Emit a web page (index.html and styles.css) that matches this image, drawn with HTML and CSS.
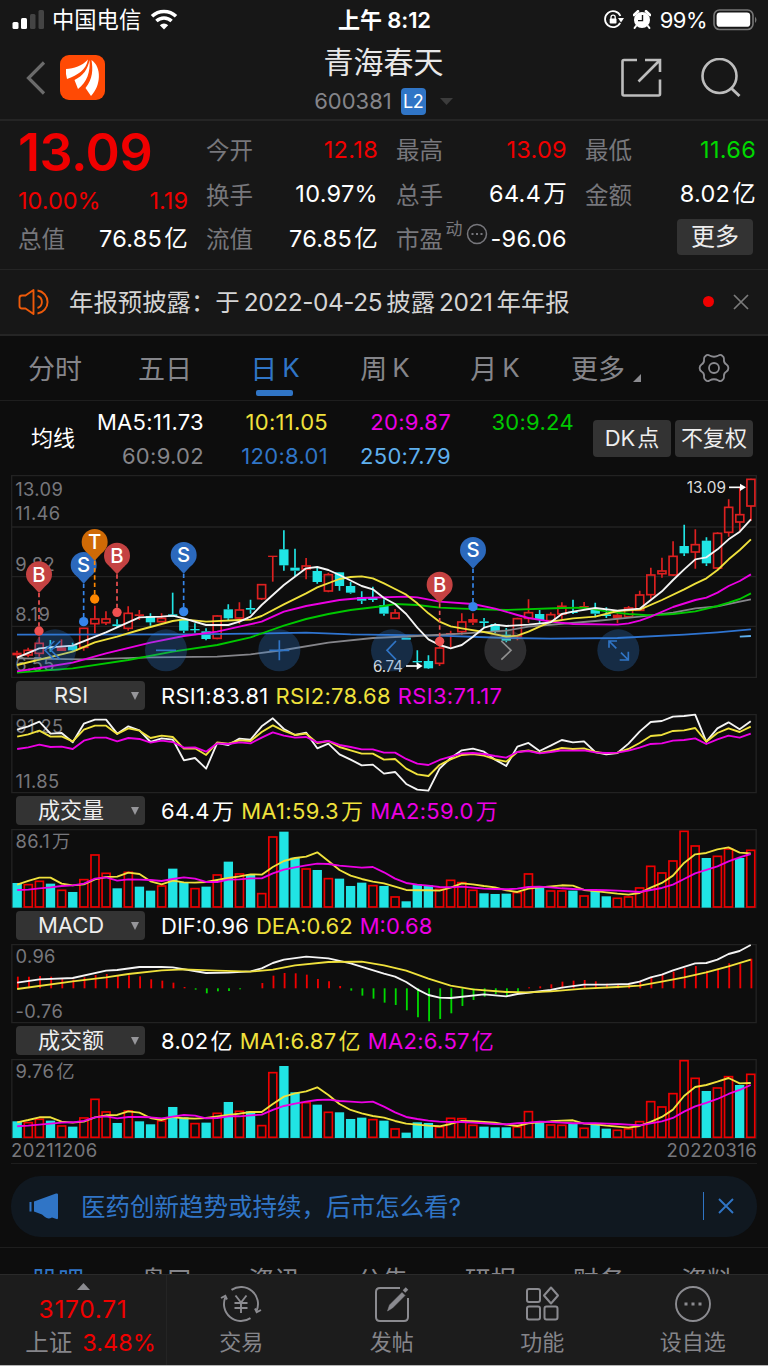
FILE: index.html
```html
<!DOCTYPE html>
<html lang="zh-CN">

<head>
    <meta charset="UTF-8">
    <meta name="viewport" content="width=device-width, initial-scale=1.0">
    <title>青海春天 600381</title>
    <link rel="stylesheet" href="styles.css">
</head>

<body>
    <div class="status">
        <div class="status-left">
            <svg class="signal" width="33" height="20" viewBox="0 0 33 20">
                <rect x="0.5" y="12" width="6" height="7" rx="1.5" fill="#fff" />
                <rect x="9" y="8" width="6" height="11" rx="1.5" fill="#fff" />
                <rect x="18" y="4" width="5.5" height="15" rx="1.5" fill="#444" />
                <rect x="26.5" y="0" width="5.5" height="19" rx="1.5" fill="#444" />
            </svg>
            <span class="carrier">中国电信</span>
            <svg width="28" height="21" viewBox="0 0 28 21">
                <path d="M2 7.2 A17.5 17.5 0 0 1 26 7.2" fill="none" stroke="#fff" stroke-width="3.6" />
                <path d="M6.4 12 A11 11 0 0 1 21.6 12" fill="none" stroke="#fff" stroke-width="3.4" />
                <path d="M14 20.5 L9.8 16.2 A6 6 0 0 1 18.2 16.2 Z" fill="#fff" />
            </svg>
        </div>
        <div class="status-time">上午 8:12</div>
        <div class="status-right">
            <svg width="20" height="19" viewBox="0 0 20 19">
                <path d="M16.9 9.5 A8 8 0 1 1 14.2 3.2" fill="none" stroke="#fff" stroke-width="1.8" transform="rotate(25 9 9.5)" />
                <path d="M14 8 h6 l-3 4.5 z" fill="#fff" />
                <rect x="5.7" y="8.6" width="6.8" height="5" rx="0.8" fill="#fff" />
                <path d="M7 9 V7.2 a2.1 2.1 0 0 1 4.2 0 V9" fill="none" stroke="#fff" stroke-width="1.3" />
            </svg>
            <svg width="18" height="19" viewBox="0 0 18 19">
                <circle cx="9" cy="10" r="8" fill="#fff" />
                <path d="M1 5 L5 1.2 M17 5 L13 1.2" stroke="#fff" stroke-width="2.6" stroke-linecap="round" />
                <path d="M3 16 L1.6 18 M15 16 L16.4 18" stroke="#fff" stroke-width="2" stroke-linecap="round" />
                <path d="M9.5 5 V10.6 H5" fill="none" stroke="#171717" stroke-width="1.4" />
            </svg>
            <span class="percent">99%</span>
            <svg width="46" height="22" viewBox="0 0 46 22">
                <rect x="1" y="1" width="39" height="19.5" rx="5.5" fill="none" stroke="#777" stroke-width="1.6" />
                <rect x="3.6" y="3.6" width="33.6" height="14.2" rx="3.4" fill="#fff" />
                <path d="M42 7.5 q3 3.3 0 6.6 z" fill="#777" />
            </svg>
        </div>
    </div>

    <div class="header">
        <div class="header-side">
            <svg width="20" height="34" viewBox="0 0 20 34">
                <path d="M18 1.5 L2.5 17 L18 32.5" fill="none" stroke="#6b6b6b" stroke-width="3.2" />
            </svg>
            <svg class="logo" width="45" height="45" viewBox="0 0 45 45">
                <rect width="45" height="45" rx="9" fill="#ff4a05" />
                <path d="M6 14 C14 13.5 22 11 28 4.500 C26 15 18 20 7 24 Q5.500 19 6 14 Z" fill="#fff" />
                <path d="M29.500 5 C30.500 17 27 27 18 34 L14.500 25 C23 21 28 14 29.500 5 Z" fill="#fff" />
                <path d="M31.500 5 C42 12 41 31 31 41 L25.500 33 C33 24 33 14 31.500 5 Z" fill="#fff" />
            </svg>
        </div>
        <div class="header-title">
            <div class="name">青海春天</div>
            <div class="code">
                <span>600381</span>
                <span class="level">L2</span>
                <svg width="13" height="7" viewBox="0 0 13 7"><path d="M0 0 H13 L6.500 7 Z" fill="#3c3c3c" /></svg>
            </div>
        </div>
        <div class="header-side right">
            <svg width="42" height="42" viewBox="0 0 42 42" fill="none" stroke="#bdbdbd" stroke-width="2.6">
                <path d="M17 3 H4 Q2.500 3 2.500 4.500 V37 Q2.500 38.500 4 38.500 H38.500 Q40 38.500 40 37 V22.500" />
                <path d="M25 3 H40 V15 M39.500 3.500 L18.500 24.500" />
            </svg>
            <svg width="40" height="40" viewBox="0 0 40 40" fill="none" stroke="#bdbdbd" stroke-width="2.6">
                <circle cx="18.500" cy="18" r="17" />
                <path d="M30 30 L38.500 38" stroke-width="3" />
            </svg>
        </div>
    </div>

    <div class="quote">
        <div class="col first">
            <div class="price">13.09</div>
            <div class="row change"><span>10.00%</span><span>1.19</span></div>
            <div class="row"><label>总值</label><b>76.85<i>亿</i></b></div>
        </div>
        <div class="col">
            <div class="row"><label>今开</label><b class="red">12.18</b></div>
            <div class="row"><label>换手</label><b>10.97%</b></div>
            <div class="row"><label>流值</label><b>76.85<i>亿</i></b></div>
        </div>
        <div class="col">
            <div class="row"><label>最高</label><b class="red">13.09</b></div>
            <div class="row"><label>总手</label><b>64.4<i>万</i></b></div>
            <div class="row">
                <label>市盈</label><span class="sup">动</span>
                <svg class="tip" width="22" height="22" viewBox="0 0 22 22">
                    <circle cx="11" cy="11" r="9.500" fill="none" stroke="#77777c" stroke-width="1.500" />
                    <path d="M5.500 11 h2 M10 11 h2 M14.500 11 h2" stroke="#77777c" stroke-width="2" />
                </svg>
                <b>-96.06</b>
            </div>
        </div>
        <div class="col">
            <div class="row"><label>最低</label><b class="green">11.66</b></div>
            <div class="row"><label>金额</label><b>8.02<i>亿</i></b></div>
            <div class="row end"><button class="more">更多</button></div>
        </div>
    </div>

    <div class="notice">
        <svg width="33" height="28" viewBox="0 0 33 28" fill="none" stroke="#ee5a0a" stroke-width="1.900">
            <path d="M15.500 2 V26 L7.500 20.500 H4 Q1.500 20.500 1.500 18 V10 Q1.500 7.500 4 7.500 H7.500 Z" stroke-linejoin="round" />
            <path d="M19.500 8 A6.300 6.300 0 0 1 19.500 20" />
            <path d="M19.500 2.500 A11.600 11.600 0 0 1 19.500 25.500" />
        </svg>
        <p>年报预披露：<span class="gap">于</span><span class="num">2022-04-25</span>披露<span class="num year">2021</span>年年报</p>
        <span class="dot"></span>
        <svg width="16" height="16" viewBox="0 0 16 16"><path d="M1 1 L15 15 M15 1 L1 15" stroke="#7b7b7b" stroke-width="1.700" /></svg>
    </div>

    <div class="tabs">
        <div class="tab">分时</div>
        <div class="tab">五日</div>
        <div class="tab active">日<span>K</span></div>
        <div class="tab">周<span>K</span></div>
        <div class="tab">月<span>K</span></div>
        <div class="tab wide">更多<svg width="8" height="8" viewBox="0 0 8 8"><path d="M8 0 V8 H0 Z" fill="#8b8b90" /></svg></div>
        <div class="tab gear">
            <svg width="32" height="30" viewBox="-16 -15 32 30" fill="none" stroke="#8b8b90" stroke-width="1.800">
                <path d="M-8.500 -12 Q-6.500 -14 -4.500 -12.500 Q0 -10 4.500 -12.500 Q6.500 -14 8.500 -12 Q10 -11 10 -9 Q9.500 -5 12.500 -3.500 Q14.500 -2 14.300 0 Q14.500 2 12.500 3.500 Q9.500 5 10 9 Q10 11 8.500 12 Q6.500 14 4.500 12.500 Q0 10 -4.500 12.500 Q-6.500 14 -8.500 12 Q-10 11 -10 9 Q-9.500 5 -12.500 3.500 Q-14.500 2 -14.300 0 Q-14.500 -2 -12.500 -3.500 Q-9.500 -5 -10 -9 Q-10 -11 -8.500 -12 Z" />
                <circle r="5" />
            </svg>
        </div>
    </div>

    <div class="ma">
        <div class="ma-name">均线</div>
        <div class="ma-values">
            <span class="white">MA5:11.73</span>
            <span class="yellow">10:11.05</span>
            <span class="pink">20:9.87</span>
            <span class="lime">30:9.24</span>
            <span class="gray">60:9.02</span>
            <span class="blue">120:8.01</span>
            <span class="sky">250:7.79</span>
        </div>
        <button>DK<i>点</i></button>
        <button>不复权</button>
    </div>

    <!-- charts are drawn in thirds of a pixel -->
    <svg class="chart kline" id="kline" viewBox="33 15 2238 609">
        <path class="grid" d="M35 17 H2269 V622 H35 Z M35 171 H2269 M35 320 H2269 M35 469 H2269" />
        <g class="axis">
            <text x="46" y="78">13.09</text>
            <text x="46" y="150">11.46</text>
            <text x="46" y="303">9.82</text>
            <text x="46" y="453">8.19</text>
            <text x="46" y="604">6.55</text>
        </g>
    </svg>

    <div class="panel-head">
        <button class="select">RSI</button>
        <p><span class="white">RSI1:83.81</span><span class="yellow">RSI2:78.68</span><span class="pink">RSI3:71.17</span></p>
    </div>
    <svg class="chart sub" id="rsi" viewBox="33 41 2238 238">
        <path class="grid" d="M35 43 H2269 V277 H35 Z" />
        <g class="axis">
            <text x="46" y="97">91.25</text>
            <text x="46" y="264">11.85</text>
        </g>
    </svg>

    <div class="panel-head">
        <button class="select">成交量</button>
        <p><span class="white">64.4<i>万</i></span><span class="yellow">MA1:59.3<i>万</i></span><span class="pink">MA2:59.0<i>万</i></span></p>
    </div>
    <svg class="chart sub" id="volume" viewBox="33 385 2238 238">
        <path class="grid" d="M35 387 H2269 V621 H35 Z" />
        <g class="axis">
            <text x="46" y="443">86.1<tspan dx="6">万</tspan></text>
        </g>
    </svg>

    <div class="panel-head narrow">
        <button class="select">MACD</button>
        <p><span class="white">DIF:0.96</span><span class="yellow">DEA:0.62</span><span class="pink">M:0.68</span></p>
    </div>
    <svg class="chart sub" id="macd" viewBox="33 100 2238 238">
        <path class="grid" d="M35 102 H2269 V336 H35 Z" />
        <g class="axis">
            <text x="46" y="157">0.96</text>
            <text x="46" y="323">-0.76</text>
        </g>
    </svg>

    <div class="panel-head">
        <button class="select">成交额</button>
        <p><span class="white">8.02<i>亿</i></span><span class="yellow">MA1:6.87<i>亿</i></span><span class="pink">MA2:6.57<i>亿</i></span></p>
    </div>
    <svg class="chart sub" id="amount" viewBox="33 445 2238 238">
        <path class="grid" d="M35 447 H2269 V682 H35 Z" />
        <g class="axis">
            <text x="46" y="503">9.76<tspan dx="6">亿</tspan></text>
        </g>
    </svg>

    <div class="dates"><span>20211206</span><span>20220316</span></div>

    <div class="banner">
        <svg width="30" height="27" viewBox="0 0 30 27" fill="#3075c6">
            <path d="M0.500 9 H2.500 V18.500 H0.500 Z M5 8.500 L27 0.500 Q29 0 29 1.500 V25 Q29 26.500 27.500 26 L23 24.500 Q19 26.500 16 24 L13 21.500 L5 18.500 Z" />
        </svg>
        <p>医药创新趋势或持续，后市怎么看?</p>
        <span class="divider"></span>
        <svg width="16" height="16" viewBox="0 0 16 16"><path d="M1 1 L15 15 M15 1 L1 15" stroke="#3075c6" stroke-width="1.900" /></svg>
    </div>

    <div class="sections">
        <span class="blue">股吧</span><span>盘口</span><span>资讯</span><span>公告</span><span>研报</span><span>财务</span><span>资料</span>
    </div>

    <div class="bottom">
        <div class="index">
            <svg width="13" height="7" viewBox="0 0 13 7"><path d="M0 7 H13 L6.500 0 Z" fill="#8b8b90" /></svg>
            <div class="red points">3170.71</div>
            <div class="change-line"><span>上证</span><span class="red">3.48%</span></div>
        </div>
        <div class="item">
            <svg width="42" height="38" viewBox="0 0 42 38" fill="none" stroke="#8b8b90" stroke-width="1.900">
                <path d="M11.500 4.900 A17 17 0 0 1 36.500 26 M30.500 33.100 A17 17 0 0 1 5.500 12" />
                <path d="M1 13 L5.300 10.800 L7 14.500 M35 23.500 L36.700 27.200 L41 25" />
                <path d="M15.500 10.500 L21 17.500 L26.500 10.500 M21 17.500 V28 M14.500 18 H27.500 M14.500 23 H27.500" />
            </svg>
            <span>交易</span>
        </div>
        <div class="item">
            <svg width="42" height="38" viewBox="0 0 42 38" fill="none" stroke="#8b8b90" stroke-width="2">
                <path d="M29 3 H9 Q5 3 5 7 V32 Q5 36 9 36 H33 Q37 36 37 32 V13" />
                <path d="M33 6.500 L36 3.500" stroke-width="3.500" />
                <path d="M16.500 26 L18.500 20 L31 7.500 L34 10.500 L21.500 23 Z" fill="#8b8b90" stroke-width="0.500" />
            </svg>
            <span>发帖</span>
        </div>
        <div class="item">
            <svg width="42" height="38" viewBox="0 0 42 38" fill="none" stroke="#8b8b90" stroke-width="2">
                <rect x="6" y="4" width="13" height="13" rx="2" />
                <rect x="6" y="21.500" width="13" height="13" rx="2" />
                <rect x="23.500" y="21.500" width="13" height="13" rx="2" />
                <path d="M30 2.500 L37 10.500 L30 18.500 L23 10.500 Z" stroke-linejoin="round" />
            </svg>
            <span>功能</span>
        </div>
        <div class="item">
            <svg width="42" height="38" viewBox="0 0 42 38" fill="none" stroke="#8b8b90" stroke-width="1.900">
                <circle cx="21" cy="19" r="17" />
                <path d="M12.500 19 h3 M19.500 19 h3 M26.500 19 h3" stroke-width="3" />
            </svg>
            <span>设自选</span>
        </div>
    </div>

    <script src="charts.js"></script>
</body>

</html>
```

FILE: styles.css
```css
* {
    box-sizing: border-box;
}

body {
    margin: 0;
    width: 768px;
    height: 1366px;
    overflow: hidden;
    background: #0d0d0d;
    color: #fff;
    font-family: Inter, "Noto Sans CJK SC", sans-serif;
    font-size: 22px;
    border-bottom: 1px solid #b4b4b4;
}

svg {
    display: block;
    flex: none;
}

p {
    margin: 0;
}

i {
    font-style: normal;
    margin-left: 2px;
    line-height: 0;
}

button {
    border: none;
    border-radius: 4px;
    padding: 0;
    background: #333;
    color: #eee;
    font: inherit;
}

.white { color: #fff; }
.yellow { color: #efe13c; }
.pink { color: #ec00e4; }
.lime { color: #00c800; }
.gray { color: #85858a; }
.blue { color: #3075c6; }
.sky { color: #5fb0ee; }
.red { color: #f00000; }
.green { color: #00d800; }

/* status bar */
.status {
    display: flex;
    align-items: center;
    height: 40px;
    padding: 0 9px 0 12px;
    background: #171717;
}

.status-left,
.status-right {
    flex: 1;
    display: flex;
    align-items: center;
    padding-bottom: 1px;
}

.status-right {
    justify-content: flex-end;
}

.signal {
    margin-right: 7px;
}

.carrier {
    font-size: 22.3px;
    margin: -3px 9px 0 0;
}

.status-time {
    font-size: 22px;
    font-weight: 600;
    letter-spacing: -0.1px;
    margin: -4px 2px 0 0;
}

.status-right svg:nth-child(2) {
    margin: 0 9px;
}

.percent {
    margin-right: 6px;
    letter-spacing: -0.5px;
}

/* header */
.header {
    display: flex;
    height: 81px;
    padding: 0 27px 0 26px;
    background: #171717;
    border-bottom: 2px solid #252525;
}

.header-side {
    flex: 1;
    display: flex;
    align-items: center;
    padding-bottom: 4px;
}

.logo {
    margin-left: 14px;
}

.header-side.right {
    justify-content: flex-end;
    gap: 39px;
}

.header-title {
    display: flex;
    flex-direction: column;
    align-items: center;
}

.name {
    font-size: 30px;
    line-height: 44px;
    color: #e8e8e8;
}

.code {
    display: flex;
    align-items: center;
    height: 34px;
    color: #85858a;
}

.level {
    width: 25px;
    height: 27px;
    margin: 0 14px 0 9px;
    border-radius: 4px;
    background: #3075c6;
    color: #fff;
    font-size: 18px;
    line-height: 27px;
    text-align: center;
    letter-spacing: -0.4px;
}

/* quote */
.quote {
    display: grid;
    grid-template-columns: 170px 172px 171px 171px;
    gap: 18px;
    height: 149px;
    padding: 6px 12px 0 18px;
    background: #171717;
    border-bottom: 1px solid #252525;
}

.row {
    display: flex;
    justify-content: space-between;
    align-items: center;
    height: 44.5px;
    font-size: 23.5px;
}

.row label {
    color: #77777c;
}

.row b {
    font-weight: 400;
    letter-spacing: 0.3px;
}

.row.end {
    justify-content: flex-end;
}

.price {
    height: 53px;
    line-height: 52px;
    font-size: 52px;
    font-weight: 600;
    letter-spacing: -0.5px;
    color: #f00000;
}

.row.change {
    height: 36px;
    padding-top: 4px;
    color: #f00000;
}

.sup {
    font-size: 17px;
    color: #77777c;
    margin: -22px 0 0 1px;
}

.tip {
    margin: -8px 1px 0 2px;
}

.more {
    width: 76px;
    height: 36px;
    margin: -2px 3px 0 0;
    font-size: 24px;
    line-height: 36px;
}

/* notice */
.notice {
    display: flex;
    align-items: center;
    height: 66px;
    padding: 0 19px 1px 18px;
    background: #171717;
    border-bottom: 2px solid #252525;
}

.notice p {
    flex: 1;
    margin: -2px 0 0 18px;
    font-size: 24.4px;
    color: #d4d4d4;
    white-space: nowrap;
}

.num {
    margin: 0 4px;
    letter-spacing: -0.4px;
}

.dot {
    width: 11px;
    height: 11px;
    margin-right: 19px;
    border-radius: 50%;
    background: #f00000;
}

/* period tabs */
.tabs {
    display: flex;
    height: 65px;
    border-bottom: 1px solid #1e1e1e;
    color: #85858a;
    font-size: 27px;
}

.tab {
    display: flex;
    align-items: center;
    justify-content: center;
    width: 110px;
    padding-bottom: 1px;
}

.tab span {
    margin-left: 5px;
    font-size: 26px;
}

.tab.active {
    color: #3075c6;
    position: relative;
}

.tab.active::after {
    content: "";
    position: absolute;
    left: 36px;
    bottom: 4px;
    width: 37px;
    height: 6px;
    border-radius: 2px;
    background: #3075c6;
}

.tab.wide {
    padding-left: 2px;
}

.tab.wide svg {
    margin: 20px 0 0 8px;
}

.tab.gear {
    width: 107px;
}

/* moving averages */
.ma {
    display: flex;
    align-items: center;
    height: 74px;
    padding-right: 15px;
}

.ma-name {
    width: 84px;
    padding: 0 0 4px 31px;
}

.ma-values {
    display: grid;
    grid-template-columns: 120px 124px 123px 123px;
    line-height: 34px;
    text-align: right;
    margin-right: 19px;
    padding-top: 1px;
    letter-spacing: 0.3px;
}

.ma button {
    width: 78px;
    height: 37px;
    margin-right: 4px;
    line-height: 36px;
    white-space: nowrap;
}

.ma button:last-child {
    margin-right: 0;
}

/* charts */
.chart {
    margin-left: 11px;
    width: 746px;
    overflow: visible;
}

.kline {
    height: 203px;
}

.sub {
    height: 79.3px;
}

.grid {
    fill: none;
    stroke: #222;
    stroke-width: 4;
}

.axis text {
    fill: #77777c;
    font-size: 55px;
    letter-spacing: 1px;
}

.line {
    fill: none;
    stroke-width: 5.6;
    stroke-linejoin: round;
}

.panel-head {
    display: flex;
    align-items: center;
    height: 35.7px;
    padding: 0 0 0 16px;
}

.select {
    width: 129px;
    height: 29px;
    padding-right: 19px;
    line-height: 29px;
    position: relative;
}

.select::after {
    content: "";
    position: absolute;
    right: 6px;
    top: 11px;
    border: 4px solid transparent;
    border-top: 8px solid #96969a;
    border-bottom: none;
}

.panel-head p {
    display: flex;
    gap: 7px;
    margin-left: 16px;
    white-space: nowrap;
    letter-spacing: 0.3px;
}

.panel-head.narrow p {
    letter-spacing: 0;
}

.dates {
    display: flex;
    justify-content: space-between;
    height: 26px;
    margin: 0 11px;
    border-bottom: 1px solid #1e1e1e;
    font-size: 18.5px;
    line-height: 24px;
    letter-spacing: 0.35px;
    color: #77777c;
}

/* banner */
.banner {
    display: flex;
    align-items: center;
    height: 61px;
    margin: 12px 11px 10px;
    padding: 0 23px 0 18px;
    border-radius: 30px;
    background: #101820;
    color: #3075c6;
}

.banner p {
    flex: 1;
    margin: -1px 0 0 22px;
    font-size: 24.5px;
}

.divider {
    width: 1px;
    height: 28px;
    margin-right: 14px;
    background: #3075c6;
}

.sections {
    display: flex;
    justify-content: space-between;
    height: 27px;
    padding: 12px 35px 0 32px;
    border-top: 1px solid #1e1e1e;
    overflow: hidden;
    font-size: 26px;
    color: #85858a;
}

/* bottom bar */
.bottom {
    display: flex;
    height: 91px;
    background: #1c1c1c;
    border-top: 1px solid #2a2a2a;
    color: #85858a;
    position: relative;
}

.index {
    display: flex;
    flex-direction: column;
    align-items: center;
    width: 167px;
    padding-top: 8px;
    margin-right: -1px;
    border-right: 1px solid #242424;
    line-height: 33px;
    font-size: 23.5px;
    white-space: nowrap;
}

.points {
    margin-top: 3px;
    font-size: 24.5px;
    letter-spacing: 0.7px;
}

.change-line {
    display: flex;
    gap: 10px;
    padding-left: 15px;
}

.item {
    display: flex;
    flex-direction: column;
    align-items: center;
    width: 150.5px;
    padding-top: 10px;
    line-height: 38px;
}
```

FILE: charts.js
```js
const NS = "http://www.w3.org/2000/svg";
const RED = "#dd2020";
const BAR_RED = "#ee0000";
const CYAN = "#20e4e4";

function x(i) {
    return 51 + 33.36 * i;
}

function draw(parent, tag, attrs, text) {
    const el = document.createElementNS(NS, tag);
    for (const key in attrs) el.setAttribute(key, attrs[key]);
    if (text) el.textContent = text;
    parent.appendChild(el);
    return el;
}

// [index, y] pairs, or one y for every day
function line(parent, values, color) {
    const points = values.map((v, i) => Array.isArray(v) ? [x(v[0]), v[1]] : [x(i), v]);
    draw(parent, "polyline", { points: points.join(" "), class: "line", stroke: color });
}

function bars(parent, tops, base) {
    tops.forEach((top, i) => {
        if (colors[i] === "c") {
            draw(parent, "rect", { x: x(i) - 14, y: top, width: 28, height: base - top, fill: CYAN });
        } else {
            draw(parent, "rect", { x: x(i) - 12, y: top + 1, width: 24, height: base - top - 3, fill: "none", stroke: BAR_RED, "stroke-width": 5 });
        }
    });
}

const colors = "crrcrcrrrcrccrccrcrcrcrrccrcrcccrcrcccrrrrcccrrcrrcrccrrrrrrrrcrrcr";

// [type, high, top, bottom, low]; r = hollow red, R = filled red, c = cyan
const candles = [
    ["R", 542, 548, 556, 563], ["r", 533, 541, 555, 562], ["r", 500, 520, 550, 560], ["c", 510, 529, 535, 545],
    ["R", 508, 532, 543, 543], ["c", 518, 526, 541, 546], ["r", 474, 475, 532, 542], ["r", 407, 447, 461, 490],
    ["r", 424, 447, 458, 465], ["c", 448, 463, 468, 471], ["r", 409, 430, 475, 482], ["R", 420, 433, 438, 450],
    ["c", 430, 438, 457, 467], ["r", 430, 445, 455, 457], ["c", 368, 433, 441, 441], ["c", 445, 450, 482, 489],
    ["c", 460, 477, 481, 488], ["c", 475, 484, 507, 511], ["r", 436, 438, 505, 508], ["c", 403, 418, 445, 451],
    ["r", 397, 420, 444, 462], ["c", 389, 414, 419, 431], ["r", 343, 344, 386, 390], ["R", 257, 257, 261, 335],
    ["c", 181, 238, 286, 302], ["c", 236, 293, 302, 320], ["r", 264, 288, 297, 328], ["c", 292, 303, 336, 341],
    ["r", 308, 314, 363, 367], ["c", 306, 307, 348, 362], ["c", 336, 348, 368, 371], ["c", 364, 381, 392, 402],
    ["c", 350, 384, 390, 396], ["c", 388, 405, 431, 437], ["r", 417, 429, 445, 447], ["c", 503, 503, 509, 509],
    ["c", 541, 573, 577, 582], ["c", 556, 573, 595, 597], ["r", 515, 534, 580, 588], ["R", 482, 489, 494, 532],
    ["r", 430, 456, 485, 494], ["R", 430, 447, 458, 465], ["c", 444, 454, 459, 474], ["c", 460, 462, 484, 490],
    ["c", 474, 494, 512, 517], ["r", 443, 446, 498, 511], ["r", 388, 428, 445, 458], ["c", 420, 432, 450, 462],
    ["r", 427, 434, 452, 455], ["r", 397, 409, 432, 448], ["c", 389, 425, 429, 432], ["R", 396, 408, 412, 415],
    ["c", 398, 420, 431, 442], ["c", 412, 433, 438, 444], ["R", 428, 434, 445, 460], ["r", 408, 414, 440, 442],
    ["r", 362, 375, 421, 423], ["r", 293, 315, 374, 386], ["r", 263, 303, 311, 323], ["r", 214, 259, 315, 318],
    ["c", 164, 228, 250, 258], ["r", 178, 224, 246, 296], ["c", 202, 212, 280, 288], ["r", 187, 190, 294, 298],
    ["r", 88, 112, 187, 200], ["r", 50, 134, 156, 182], ["r", 26, 28, 108, 152]
];

const kline = document.getElementById("kline");
candles.forEach(([type, high, top, bottom, low], i) => {
    const color = type === "c" ? CYAN : RED;
    draw(kline, "path", {
        d: `M${x(i)} ${high} V${top} M${x(i)} ${bottom} V${low}`,
        stroke: color, "stroke-width": 5
    });
    if (type === "r") {
        draw(kline, "rect", { x: x(i) - 12, y: top, width: 24, height: bottom - top, fill: "none", stroke: color, "stroke-width": 5 });
    } else {
        draw(kline, "rect", { x: x(i) - 14, y: top, width: 28, height: bottom - top, fill: color });
    }
});

// MA250, MA120, MA60, MA30, MA20, MA10, MA5
line(kline, [[65, 500], [66, 498]], "#5fb0ee");
line(kline, [[0, 494], [15, 493], [21, 491], [26, 488], [30, 493], [38, 497], [44, 504], [48, 506], [54, 504], [60, 494], [63, 487], [66, 478]], "#2f74d0");
line(kline, [[0, 565], [6, 568], [12, 562], [18, 560], [21, 553], [24, 540], [28, 518], [32, 504], [36, 498], [40, 491], [44, 482], [46, 470], [52, 453], [56, 440], [59, 428], [61, 415], [63, 409], [65, 395], [66, 388]], "#85858a");
line(kline, [[0, 608], [5, 595], [10, 570], [14, 545], [18, 525], [21, 502], [24, 467], [26, 447], [28, 432], [30, 420], [33, 408], [34, 402], [36, 405], [38, 413], [40, 416], [44, 420], [49, 414], [51, 413], [53, 424], [55, 432], [57, 436], [59, 432], [61, 424], [63, 408], [64, 398], [65, 387], [66, 370]], "#00c800");
line(kline, [[0, 604], [2, 594], [5, 578], [8, 550], [12, 518], [15, 498], [18, 485], [20, 470], [22, 455], [24, 425], [26, 408], [29, 390], [31, 384], [35, 380], [36, 382], [38, 395], [41, 402], [43, 416], [45, 435], [46, 444], [48, 455], [50, 462], [54, 464], [55, 460], [56, 452], [57, 440], [59, 411], [61, 390], [62, 383], [63, 368], [64, 348], [65, 333], [66, 313]], "#ec00e4");
line(kline, [[0, 585], [4, 553], [5, 545], [7, 517], [9, 500], [11, 480], [14, 453], [15, 448], [17, 455], [20, 450], [21, 449], [22, 438], [24, 403], [26, 370], [27, 352], [29, 327], [30, 321], [31, 319], [32, 325], [33, 340], [34, 357], [35, 374], [36, 400], [37, 430], [38, 455], [39, 469], [40, 475], [42, 486], [44, 500], [45, 497], [46, 485], [47, 470], [48, 455], [50, 445], [52, 440], [54, 423], [56, 419], [58, 390], [60, 358], [61, 341], [62, 325], [63, 300], [64, 268], [65, 240], [66, 208]], "#efe13c");
line(kline, [[0, 563], [2, 535], [3, 532], [5, 527], [8, 487], [11, 442], [13, 440], [14, 437], [15, 445], [17, 465], [19, 465], [20, 455], [21, 440], [22, 405], [24, 345], [26, 295], [27, 291], [28, 300], [29, 315], [31, 348], [32, 358], [33, 384], [34, 402], [35, 432], [36, 473], [37, 508], [38, 525], [39, 535], [40, 525], [41, 500], [42, 473], [43, 464], [44, 468], [46, 464], [48, 457], [49, 432], [50, 425], [52, 414], [54, 422], [56, 416], [57, 390], [58, 364], [59, 330], [60, 298], [61, 268], [62, 262], [63, 238], [64, 208], [65, 185], [66, 148]], "#f4f4f4");

// price notes with arrows
draw(kline, "text", { x: 2060, y: 69, fill: "#ddd", "font-size": 46, textLength: 118 }, "13.09");
draw(kline, "path", { d: "M2187 52 H2225", stroke: "#fff", "stroke-width": 5 });
draw(kline, "path", { d: "M2220 41 L2238 52 L2220 63 Z", fill: "#fff" });
draw(kline, "text", { x: 1119, y: 605, fill: "#ddd", "font-size": 46, textLength: 90 }, "6.74");
draw(kline, "path", { d: "M1218 588 H1255", stroke: "#fff", "stroke-width": 5 });
draw(kline, "path", { d: "M1250 577 L1268 588 L1250 599 Z", fill: "#fff" });

// round chart controls
const controls = [
    [165, "M-2 -28 L-30 0 L-2 28 M16 -28 L-12 0 L16 28"],
    [498, "M-30 0 H30"],
    [838, "M-30 0 H30 M0 -30 V30"],
    [1176, "M12 -28 L-15 0 L12 28"],
    [1516, "M-12 -28 L17 0 L-12 28"],
    [1855, "M-28 -8 V-28 H-4 M-28 -28 L-6 -6 M30 4 V29 H4 M30 29 L8 7"]
];
controls.forEach(([cx, d], i) => {
    const off = i === 4;
    draw(kline, "circle", { cx: cx, cy: 541, r: 63, fill: off ? "#86868c" : "#3180dc", "fill-opacity": off ? 0.28 : 0.27 });
    draw(kline, "path", { d: d, transform: `translate(${cx} 541)`, fill: "none", stroke: off ? "#909090" : "#3075c6", "stroke-width": 5 });
});

// trade marks: [letter, x, pin y, dot y]
const pins = [
    ["B", 117, 313, 483], ["S", 251, 285, 455], ["T", 284, 216, 387], ["B", 351, 257, 427],
    ["S", 551, 255, 425], ["B", 1319, 344, 514], ["S", 1419, 240, 410]
];
const pinColors = {
    B: ["#c44242", "#f05050"],
    S: ["#2b69bd", "#3585ea"],
    T: ["#cf6a06", "#ff8800"]
};
pins.forEach(([letter, px, py, dot]) => {
    const [fill, bright] = pinColors[letter];
    draw(kline, "path", { d: `M${px} ${py + 56} V${dot - 14}`, stroke: bright, "stroke-width": 5, "stroke-dasharray": "13 9" });
    draw(kline, "circle", { cx: px, cy: dot, r: 14, fill: bright });
    draw(kline, "path", { d: `M${px - 24} ${py + 30} L${px} ${py + 56} L${px + 24} ${py + 30} Z`, fill: fill });
    draw(kline, "circle", { cx: px, cy: py, r: 39, fill: fill });
    draw(kline, "text", { x: px, y: py + 22, fill: "#fff", "font-size": 61, "font-weight": 500, "text-anchor": "middle" }, letter);
});

const rsi = document.getElementById("rsi");
line(rsi, [88, 78, 64, 100, 98, 126, 70, 58, 58, 100, 78, 90, 125, 114, 118, 180, 173, 205, 128, 134, 115, 118, 78, 54, 86, 104, 97, 144, 130, 162, 178, 195, 193, 220, 215, 251, 268, 271, 205, 173, 150, 145, 154, 178, 197, 139, 128, 152, 136, 119, 126, 123, 155, 162, 158, 130, 94, 65, 62, 49, 47, 43, 124, 84, 66, 87, 63], "#f4f4f4");
line(rsi, [109, 102, 91, 109, 108, 123, 88, 76, 76, 101, 84, 91, 113, 106, 110, 145, 144, 164, 126, 130, 120, 122, 95, 75, 92, 104, 100, 128, 122, 140, 150, 160, 160, 178, 176, 205, 222, 227, 194, 177, 164, 161, 166, 177, 184, 155, 150, 158, 152, 143, 146, 144, 155, 159, 157, 146, 128, 107, 104, 92, 90, 83, 124, 98, 84, 95, 79], "#efe13c");
line(rsi, [146, 141, 133, 140, 139, 146, 121, 112, 112, 123, 113, 116, 127, 121, 125, 142, 141, 154, 129, 131, 126, 129, 112, 96, 106, 112, 110, 126, 122, 134, 140, 147, 147, 157, 157, 176, 190, 194, 179, 169, 159, 158, 161, 167, 172, 155, 152, 159, 155, 150, 151, 150, 156, 158, 157, 151, 142, 131, 129, 121, 119, 114, 131, 117, 106, 112, 100], "#ec00e4");

const volume = document.getElementById("volume");
bars(volume, [547, 551, 541, 549, 568, 574, 536, 462, 517, 563, 514, 558, 570, 555, 504, 544, 563, 558, 522, 483, 519, 522, 578, 408, 393, 471, 504, 508, 533, 534, 556, 546, 554, 556, 588, 602, 552, 554, 565, 538, 545, 568, 578, 580, 579, 575, 519, 561, 570, 570, 570, 585, 571, 587, 592, 588, 561, 496, 516, 480, 391, 435, 472, 466, 444, 472, 448], 621);
line(volume, [552, 541, 531, 531, 549, 554, 551, 536, 529, 528, 516, 520, 542, 551, 540, 545, 546, 544, 538, 532, 527, 521, 522, 499, 481, 472, 468, 455, 481, 508, 525, 535, 543, 548, 558, 568, 569, 569, 570, 561, 548, 551, 556, 560, 569, 574, 564, 560, 557, 554, 555, 568, 571, 575, 579, 582, 577, 561, 547, 525, 487, 461, 457, 446, 440, 456, 458], "#efe13c");
line(volume, [568, 567, 563, 560, 556, 554, 549, 534, 530, 540, 536, 537, 538, 541, 535, 530, 534, 544, 544, 537, 536, 533, 533, 518, 507, 500, 494, 489, 490, 495, 498, 501, 499, 515, 534, 547, 552, 555, 559, 560, 558, 561, 564, 565, 566, 564, 559, 558, 560, 563, 565, 567, 568, 569, 570, 572, 574, 568, 562, 552, 535, 518, 508, 497, 482, 470, 460], "#ec00e4");

const macd = document.getElementById("macd");
[198, 198, 196, 198, 203, 207, 200, 193, 190, 196, 194, 197, 206, 210, 216, 229, 237, 248, 242, 241, 236, 233, 217, 195, 187, 188, 192, 205, 212, 226, 240, 255, 264, 276, 283, 299, 320, 332, 325, 308, 286, 268, 258, 250, 256, 243, 230, 227, 221, 213, 210, 208, 212, 219, 222, 220, 213, 200, 192, 183, 172, 166, 180, 174, 158, 160, 144].forEach((y, i) => {
    draw(macd, "path", { d: `M${x(i) + 2} 233 V${y}`, stroke: y < 233 ? "#f00000" : "#00d800", "stroke-width": 5.5 });
});
line(macd, [[0, 216], [2, 206], [5, 202], [8, 180], [9, 178], [11, 169], [13, 169], [14, 170], [17, 187], [19, 186], [21, 182], [22, 173], [23, 157], [24, 147], [26, 138], [28, 143], [30, 158], [33, 189], [34, 198], [35, 214], [36, 236], [37, 253], [38, 261], [39, 262], [42, 251], [43, 254], [44, 257], [45, 250], [48, 238], [49, 231], [51, 222], [53, 222], [55, 220], [56, 213], [57, 200], [58, 192], [59, 179], [61, 158], [62, 157], [63, 147], [64, 130], [65, 121], [66, 103]], "#f4f4f4");
line(macd, [[0, 235], [5, 212], [8, 200], [10, 190], [13, 179], [15, 176], [18, 180], [21, 183], [23, 177], [25, 164], [28, 154], [31, 153], [33, 164], [35, 180], [37, 204], [39, 225], [41, 236], [44, 244], [46, 245], [48, 242], [51, 234], [54, 229], [56, 225], [58, 213], [60, 200], [62, 185], [64, 167], [66, 147]], "#efe13c");

const amount = document.getElementById("amount");
bars(amount, [632, 635, 625, 630, 645, 648, 621, 565, 603, 637, 600, 632, 641, 630, 589, 620, 638, 636, 607, 574, 601, 602, 644, 485, 466, 545, 575, 582, 604, 605, 625, 621, 626, 630, 654, 666, 635, 637, 648, 622, 623, 643, 648, 650, 650, 648, 602, 637, 642, 643, 640, 652, 642, 654, 658, 654, 632, 572, 588, 548, 449, 502, 541, 531, 497, 523, 490], 682);
line(amount, [635, 628, 620, 620, 633, 636, 633, 620, 614, 613, 602, 606, 622, 628, 619, 623, 624, 622, 617, 613, 609, 604, 604, 580, 558, 548, 542, 530, 553, 580, 598, 608, 616, 621, 631, 639, 642, 645, 647, 640, 631, 632, 634, 636, 642, 646, 638, 635, 632, 630, 629, 639, 641, 645, 648, 651, 646, 634, 619, 597, 556, 529, 523, 513, 502, 518, 517], "#efe13c");
line(amount, [647, 645, 642, 639, 636, 635, 631, 620, 617, 623, 619, 619, 620, 623, 618, 613, 615, 623, 622, 617, 617, 614, 612, 598, 586, 579, 573, 568, 567, 571, 573, 575, 573, 588, 605, 619, 625, 630, 633, 634, 634, 636, 638, 640, 641, 638, 636, 633, 634, 636, 638, 638, 638, 639, 640, 642, 644, 638, 632, 622, 603, 587, 577, 565, 550, 538, 523], "#ec00e4");
```
